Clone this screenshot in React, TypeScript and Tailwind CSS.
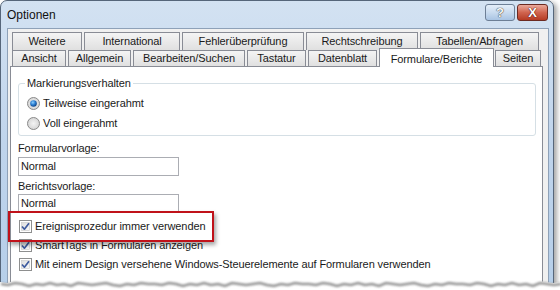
import React from "react";

const FONT = "font-['Liberation_Sans',Arial,sans-serif]";

type Tab = { label: string; w: string };

const backRow: Tab[] = [
  { label: "Weitere", w: "w-[70px]" },
  { label: "International", w: "w-[96px]" },
  { label: "Fehlerüberprüfung", w: "w-[122px]" },
  { label: "Rechtschreibung", w: "w-[112px]" },
  { label: "Tabellen/Abfragen", w: "w-[119px]" },
];

const frontRow: Tab[] = [
  { label: "Ansicht", w: "w-[54px]" },
  { label: "Allgemein", w: "w-[63px]" },
  { label: "Bearbeiten/Suchen", w: "w-[112px]" },
  { label: "Tastatur", w: "w-[59px]" },
  { label: "Datenblatt", w: "w-[69px]" },
];

function RadioDot({ checked }: { checked?: boolean }) {
  return (
    <svg width="13" height="13" viewBox="0 0 13 13">
      <defs>
        <radialGradient id="rbg" cx="0.5" cy="0.5" r="0.6">
          <stop offset="0" stopColor="#f4f4f4" />
          <stop offset="1" stopColor="#cfcfcf" />
        </radialGradient>
        <radialGradient id="rdot" cx="0.4" cy="0.35" r="0.7">
          <stop offset="0" stopColor="#8fd0ff" />
          <stop offset="0.5" stopColor="#2b7fd2" />
          <stop offset="1" stopColor="#0c3a7a" />
        </radialGradient>
      </defs>
      <circle cx="6.5" cy="6.5" r="6" fill="url(#rbg)" stroke="#8a8a8a" />
      {checked && <circle cx="6.5" cy="6.5" r="3.3" fill="url(#rdot)" />}
    </svg>
  );
}

function CheckBox() {
  return (
    <svg width="13" height="13" viewBox="0 0 13 13">
      <defs>
        <linearGradient id="cbg" x1="0" y1="0" x2="1" y2="1">
          <stop offset="0" stopColor="#dcdcdc" />
          <stop offset="1" stopColor="#fafafa" />
        </linearGradient>
      </defs>
      <rect x="0.5" y="0.5" width="12" height="12" fill="#fff" stroke="#8e8f8f" />
      <rect x="2.5" y="2.5" width="8" height="8" fill="url(#cbg)" stroke="#c8c8c8" strokeWidth="0.6" />
      <path d="M3 6.5 L5.4 9.2 L10 3.2" fill="none" stroke="#3d5a9e" strokeWidth="1.7" strokeLinejoin="round" />
    </svg>
  );
}

function TornEdge() {
  const pts: string[] = [];
  const ys = [2, 3, 1, 2, 4, 2, 3, 1, 3, 2, 4, 1, 2, 3, 2, 1, 3, 4, 2, 3, 1, 2];
  for (let x = 0, i = 0; x <= 560; x += 7, i++) {
    pts.push(`${x},${ys[i % ys.length] + 2}`);
  }
  const line = pts.join(" ");
  return (
    <svg className="absolute left-0 bottom-0" width="560" height="12" viewBox="0 0 560 12">
      <defs>
        <filter id="tblur" x="-5%" y="-100%" width="110%" height="300%">
          <feGaussianBlur stdDeviation="1.3" />
        </filter>
      </defs>
      <polygon points={`0,12 ${line} 560,12`} fill="#fff" />
      <polyline points={line} transform="translate(1,2)" fill="none" stroke="#6f6f6f" strokeWidth="2.5" filter="url(#tblur)" opacity="0.75" />
    </svg>
  );
}

export default function App() {
  return (
    <div className={`relative w-[560px] h-[290px] overflow-hidden bg-white text-[11px] tracking-[-0.1px] text-[#1a1a1a] ${FONT}`}>
      <div className="flex">
        <div className="w-[554px] h-[290px] flex flex-col rounded-t-[7px] border border-[#56667a] bg-gradient-to-b from-[#d3e2f2] via-[#bfd4ec] to-[#b6cfe9] shadow-[3px_2px_5px_rgba(0,0,0,0.35)]">
          {/* title bar */}
          <div className="h-[27px] flex items-center pl-[6px] pr-[5px]">
            <span className="text-[12px] tracking-normal text-[#111]">Optionen</span>
            <div className="ml-auto flex gap-[2px] -mt-[4px]">
              <div className="w-[30px] h-[17px] rounded-[3px] border border-[#6d7f96] bg-gradient-to-b from-[#e4eef9] via-[#c9dbef] to-[#a9c4e3] flex items-center justify-center text-[13px] font-bold text-[#f8f8f8] [text-shadow:0_0_1px_#333,0_0_1px_#333]">
                ?
              </div>
              <div className="w-[31px] h-[17px] rounded-[3px] border border-[#6b2a22] bg-gradient-to-b from-[#e9a99c] via-[#d0644f] to-[#b53a23] flex items-center justify-center text-[13px] font-bold text-white [text-shadow:0_0_1px_#400,0_0_1px_#400]">
                X
              </div>
            </div>
          </div>
          {/* dialog body */}
          <div className="flex-1 ml-[6px] mr-[4px] border border-b-0 border-[#8ea1b8] bg-[#f0f0f0] pl-[2px] pr-[5px] pt-[3px] flex flex-col">
            <div className="ml-[2px] flex gap-[2px] h-[18px]">
              {backRow.map((t) => (
                <div
                  key={t.label}
                  className={`${t.w} h-[18px] border border-b-0 border-[#898c95] bg-gradient-to-b from-[#f4f4f4] to-[#e0e0e0] flex items-center justify-center`}
                >
                  {t.label}
                </div>
              ))}
            </div>
            <div className="ml-[2px] flex items-end h-[16px]">
              {frontRow.map((t) => (
                <div
                  key={t.label}
                  className={`${t.w} mr-[2px] last:mr-0 h-[16px] border border-b-0 border-[#898c95] bg-gradient-to-b from-[#f4f4f4] to-[#e0e0e0] flex items-center justify-center`}
                >
                  {t.label}
                </div>
              ))}
              <div className="w-[115px] h-[19px] translate-y-[1px] relative z-10 border border-b-0 border-[#898c95] bg-white flex items-start justify-center pt-[2px]">
                Formulare/Berichte
              </div>
              <div className="w-[46px] ml-[1px] h-[16px] border border-b-0 border-[#898c95] bg-gradient-to-b from-[#f4f4f4] to-[#e0e0e0] flex items-center justify-center">
                Seiten
              </div>
            </div>
            <div className="flex-1 border border-b-0 border-[#898c95] bg-white px-[7px] flex flex-col">
              <fieldset className="mt-[9px] mr-[-1px] rounded-[3px] border border-[#d5dfe5] pl-[8px] pb-[2px]">
                <legend className="-ml-[2px] px-[2px] leading-[14px]">Markierungsverhalten</legend>
                <div className="pt-[3px]">
                  <div className="h-[20px] flex items-center gap-[3px]">
                    <RadioDot checked />
                    <span>Teilweise eingerahmt</span>
                  </div>
                  <div className="h-[20px] flex items-center gap-[3px]">
                    <RadioDot />
                    <span>Voll eingerahmt</span>
                  </div>
                </div>
              </fieldset>
              <div className="mt-[5px] leading-[14px]">Formularvorlage:</div>
              <div className="mt-[2px] w-[161px] h-[19px] border border-[#abadb3] pl-[2px] flex items-center">Normal</div>
              <div className="mt-[3px] leading-[14px]">Berichtsvorlage:</div>
              <div className="mt-[1px] w-[161px] h-[19px] border border-[#abadb3] pl-[2px] flex items-center">Normal</div>
              <div className="mt-[4px] ml-[1px] flex flex-col">
                <div className="h-[19px] flex items-center gap-[3px]">
                  <CheckBox />
                  <span>Ereignisprozedur immer verwenden</span>
                </div>
                <div className="h-[19px] flex items-center gap-[3px]">
                  <CheckBox />
                  <span>SmartTags in Formularen anzeigen</span>
                </div>
                <div className="h-[19px] flex items-center gap-[3px]">
                  <CheckBox />
                  <span>Mit einem Design versehene Windows-Steuerelemente auf Formularen verwenden</span>
                </div>
              </div>
            </div>
          </div>
        </div>
      </div>
      {/* highlight marker */}
      <div className="absolute left-[8px] top-[211px] w-[206px] h-[31px] border-[2px] border-[#c0121a] shadow-[2px_3px_4px_rgba(0,0,0,0.35)]" />
      <TornEdge />
    </div>
  );
}
